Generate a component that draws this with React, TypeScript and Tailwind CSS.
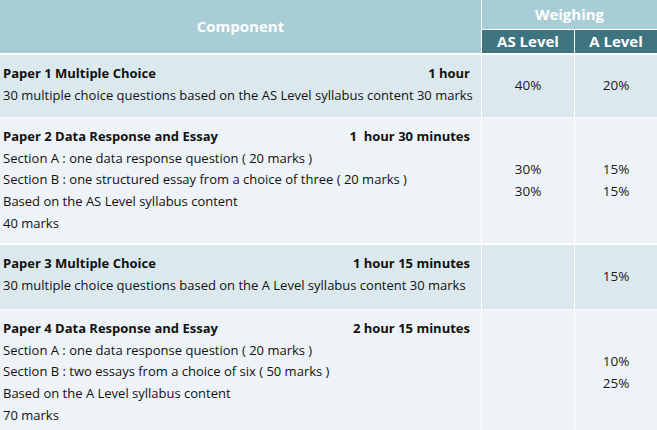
import React from "react";

const font = { fontFamily: '"Open Sans", "Noto Sans", sans-serif' };

function Row({
  bg,
  h,
  title,
  time,
  lines,
  as,
  a,
  mt,
}: {
  bg: string;
  h: string;
  title: string;
  time: string;
  lines: string[];
  as: string[];
  a: string[];
  mt: string;
}) {
  return (
    <div className={`flex gap-px ${mt} ${h}`}>
      <div className={`w-[481px] ${bg} pl-[3px] pr-[11px] pt-[8px] text-[13px] leading-[21.7px] text-[#111]`}>
        <div className="flex justify-between font-bold">
          <span>{title}</span>
          <span className="whitespace-pre">{time}</span>
        </div>
        {lines.map((l, i) => (
          <div key={i} className="whitespace-pre">{l}</div>
        ))}
      </div>
      <div className={`w-[92px] ${bg} flex flex-col items-center justify-center text-[13.5px] leading-[21.7px] text-[#1a1a1a]`}>
        {as.map((p, i) => (
          <div key={i}>{p}</div>
        ))}
      </div>
      <div className={`flex-1 ${bg} flex flex-col items-center justify-center text-[13.5px] leading-[21.7px] text-[#1a1a1a]`}>
        {a.map((p, i) => (
          <div key={i}>{p}</div>
        ))}
      </div>
    </div>
  );
}

export default function App() {
  const dark = "bg-[#dbe9ee]";
  const light = "bg-[#edf3f7]";
  return (
    <div className="w-[657px] h-[430px] overflow-hidden bg-white" style={font}>
      <div className="flex gap-px h-[53px]">
        <div className="w-[481px] bg-[#a9cdd6] flex items-center justify-center text-white font-bold text-[15px]">
          Component
        </div>
        <div className="flex-1 flex flex-col gap-px">
          <div className="h-[29px] bg-[#a9cdd6] flex items-center justify-center text-white font-bold text-[15px]">
            Weighing
          </div>
          <div className="flex-1 flex gap-px">
            <div className="w-[92px] bg-[#3e7380] flex items-center justify-center text-white font-bold text-[15px]">
              AS Level
            </div>
            <div className="flex-1 bg-[#3e7380] flex items-center justify-center text-white font-bold text-[15px]">
              A Level
            </div>
          </div>
        </div>
      </div>
      <Row
        mt="mt-[2px]"
        bg={dark}
        h="h-[62px]"
        title="Paper 1 Multiple Choice"
        time="1 hour"
        lines={["30 multiple choice questions based on the AS Level syllabus content 30 marks"]}
        as={["40%"]}
        a={["20%"]}
      />
      <Row
        mt="mt-px"
        bg={light}
        h="h-[125px]"
        title="Paper 2 Data Response and Essay"
        time="1  hour 30 minutes"
        lines={[
          "Section A : one data response question ( 20 marks )",
          "Section B : one structured essay from a choice of three ( 20 marks )",
          "Based on the AS Level syllabus content",
          "40 marks",
        ]}
        as={["30%", "30%"]}
        a={["15%", "15%"]}
      />
      <Row
        mt="mt-[2px]"
        bg={dark}
        h="h-[64px]"
        title="Paper 3 Multiple Choice"
        time="1 hour 15 minutes"
        lines={["30 multiple choice questions based on the A Level syllabus content 30 marks"]}
        as={[]}
        a={["15%"]}
      />
      <Row
        mt="mt-px"
        bg={light}
        h="h-[126px]"
        title="Paper 4 Data Response and Essay"
        time="2 hour 15 minutes"
        lines={[
          "Section A : one data response question ( 20 marks )",
          "Section B : two essays from a choice of six ( 50 marks )",
          "Based on the A Level syllabus content",
          "70 marks",
        ]}
        as={[]}
        a={["10%", "25%"]}
      />
    </div>
  );
}
